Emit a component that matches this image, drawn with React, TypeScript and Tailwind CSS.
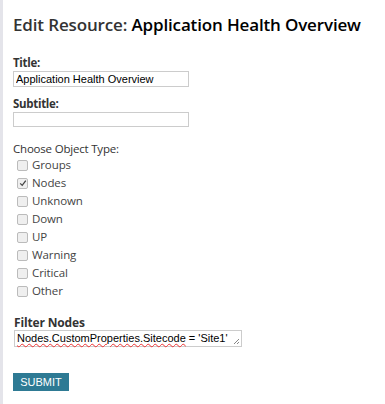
import { useState } from 'react';

const types = ['Groups', 'Nodes', 'Unknown', 'Down', 'UP', 'Warning', 'Critical', 'Other'];

export default function App() {
  const [checked, setChecked] = useState<string[]>(['Nodes']);

  function toggle(t: string) {
    setChecked(checked.includes(t) ? checked.filter((c) => c !== t) : [...checked, t]);
  }

  return (
    <div className="flex min-h-[404px] bg-white font-['Open_Sans',sans-serif] text-[#333]">
      <div className="w-[3px] shrink-0 bg-[#e4e4ea]" />
      <div className="pl-[10px] pt-[12px]">
        <h1 className="whitespace-nowrap text-[17px] font-semibold leading-[25px] tracking-[-0.15px]">
          Edit Resource: <span className="text-black">Application Health Overview</span>
        </h1>

        <div className="mt-[19px]">
          <label className="block text-[11.5px] font-bold leading-[14px] tracking-[-0.3px]">Title:</label>
          <input
            defaultValue="Application Health Overview"
            className="mt-[1px] block h-[16px] w-[176px] border border-[#ccc] px-[2px] font-['Liberation_Sans',sans-serif] text-[11px] text-black outline-none"
          />
        </div>

        <div className="mt-[10px]">
          <label className="block text-[11.5px] font-bold leading-[14px] tracking-[-0.3px]">Subtitle:</label>
          <input className="mt-[1px] block h-[15px] w-[176px] border border-[#ccc] px-[2px] font-['Liberation_Sans',sans-serif] text-[11px] outline-none" />
        </div>

        <p className="mt-[14px] text-[11.5px] leading-[16px] tracking-[-0.2px]">Choose Object Type:</p>
        <div className="mt-[-1px]">
          {types.map((t) => (
            <label key={t} className="flex h-[18px] items-center gap-[4px] text-[11.5px] tracking-[-0.1px] text-[#444]">
              <span
                onClick={() => toggle(t)}
                className="ml-[4px] flex h-[11px] w-[11px] items-center justify-center rounded-[2px] border border-[#bbb] bg-[#efefef]"
              >
                {checked.includes(t) && (
                  <svg viewBox="0 0 10 10" className="h-[8px] w-[8px]">
                    <path d="M1.5 5.5 L4 8 L8.5 2" stroke="#444" strokeWidth="1.6" fill="none" />
                  </svg>
                )}
              </span>
              {t}
            </label>
          ))}
        </div>

        <div className="mt-[16px] pl-[1px]">
          <label className="block text-[12px] font-bold leading-[14px] tracking-[-0.15px]">Filter Nodes</label>
          <div className="relative h-[17px] w-[228px] border border-[#ccc] bg-white">
            <p className="whitespace-nowrap pl-[2px] font-['Liberation_Sans',sans-serif] text-[11px] leading-[15px] text-black">
              <span className="underline decoration-[#e33] decoration-wavy decoration-[1px]">
                Nodes.CustomProperties.Sitecode
              </span>{' '}
              = 'Site1'
            </p>
            <svg viewBox="0 0 8 8" className="absolute bottom-[1px] right-[1px] h-[8px] w-[8px]">
              <path d="M7 2 L2 7 M7 5 L5 7" stroke="#888" strokeWidth="1" />
            </svg>
          </div>
        </div>

        <button className="mt-[26px] h-[18px] w-[56px] bg-[#2e7a94] font-['Liberation_Sans',sans-serif] text-[11px] text-white">
          SUBMIT
        </button>
      </div>
    </div>
  );
}
